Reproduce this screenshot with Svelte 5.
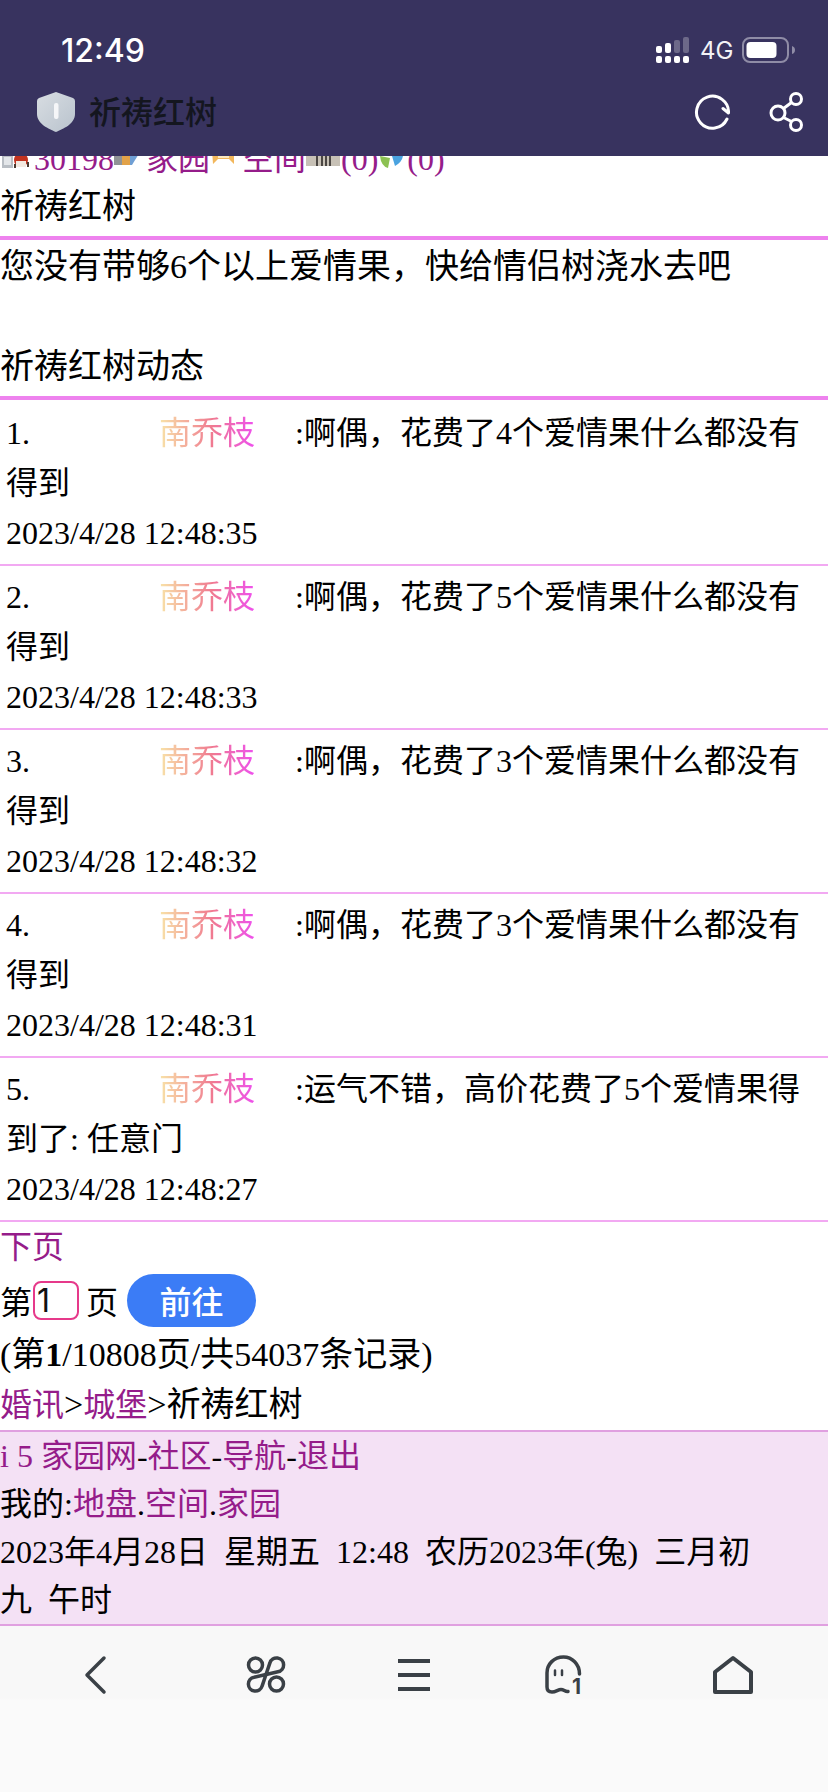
<script>
  const rows = [
    { n: '1.', text: ':啊偶，花费了4个爱情果什么都没有得到', date: '2023/4/28 12:48:35' },
    { n: '2.', text: ':啊偶，花费了5个爱情果什么都没有得到', date: '2023/4/28 12:48:33' },
    { n: '3.', text: ':啊偶，花费了3个爱情果什么都没有得到', date: '2023/4/28 12:48:32' },
    { n: '4.', text: ':啊偶，花费了3个爱情果什么都没有得到', date: '2023/4/28 12:48:31' },
    { n: '5.', text: ':运气不错，高价花费了5个爱情果得到了: 任意门', date: '2023/4/28 12:48:27' }
  ];
</script>

<div class="screen">
  <header class="top">
    <div class="status">
      <span class="time">12:49</span>
      <div class="status-right">
        <svg class="signal" width="34" height="26" viewBox="0 0 34 26">
          <g fill="#fff">
            <rect x="0" y="19" width="6" height="7" rx="2" />
            <rect x="9" y="19" width="6" height="7" rx="2" />
            <rect x="18" y="19" width="6" height="7" rx="2" />
            <rect x="27" y="19" width="6" height="7" rx="2" />
            <rect x="0" y="9" width="6" height="7" rx="2" />
            <rect x="9" y="6" width="6" height="10" rx="2" />
          </g>
          <g fill="#6d6989">
            <rect x="18" y="3" width="6" height="13" rx="2" />
            <rect x="27" y="0" width="6" height="16" rx="2" />
          </g>
        </svg>
        <span class="net">4G</span>
        <svg class="battery" width="54" height="26" viewBox="0 0 54 26">
          <rect x="1" y="1" width="45" height="24" rx="7" fill="none" stroke="#8f8ca6" stroke-width="2" />
          <rect x="4.500" y="5" width="30" height="16" rx="4" fill="#fff" />
          <path d="M50 9 Q53 10 53 13 Q53 16 50 17 Z" fill="#8f8ca6" />
        </svg>
      </div>
    </div>
    <div class="titlebar">
      <svg width="38" height="40" viewBox="0 0 38 40">
        <defs>
          <linearGradient id="sh" x1="0" y1="0" x2="1" y2="1">
            <stop offset="0" stop-color="#d8dde2" />
            <stop offset="1" stop-color="#b9c3cd" />
          </linearGradient>
        </defs>
        <path d="M19 0 L36 6 Q38 7 38 9 V22 C38 32 26 37 19 40 C12 37 0 32 0 22 V9 Q0 7 2 6 Z" fill="url(#sh)" />
        <rect x="17" y="11" width="4.500" height="16" rx="2" fill="#f5f6f8" />
      </svg>
      <span class="apptitle">祈祷红树</span>
      <svg class="refresh" width="36" height="36" viewBox="0 0 36 36" fill="none" stroke="#fff" stroke-width="3" stroke-linecap="round" stroke-linejoin="round">
        <path d="M33 25 A16 16 0 1 1 34.500 19 L29 14.500" />
      </svg>
      <svg class="share" width="36" height="42" viewBox="0 0 36 42" fill="none" stroke="#fff" stroke-width="3">
        <circle cx="9" cy="22" r="7" />
        <circle cx="27" cy="8" r="5.500" />
        <circle cx="27" cy="34" r="5.500" />
        <path d="M14.500 17.500 L22.500 11.500 M14.500 26.500 L22.500 30.500" />
      </svg>
    </div>
  </header>

  <main class="page">
    <div class="toprow">
      <svg class="ico w34" viewBox="0 0 34 30">
        <rect x="2" y="10" width="11" height="18" fill="#b9bec4" />
        <rect x="4" y="17" width="7" height="8" fill="#e3e6e9" />
        <circle cx="21" cy="20" r="7" fill="#c2331f" />
        <rect x="16" y="21" width="10" height="6" fill="#f3e9e0" />
        <rect x="14" y="24" width="2" height="4" fill="#4a3a30" />
        <rect x="27" y="22" width="2" height="5" fill="#4a3a30" />
      </svg><a href="#a">30198</a><svg class="ico w32" viewBox="0 0 32 30">
        <rect x="0" y="14" width="8" height="11" fill="#8f9396" />
        <rect x="8" y="12" width="8" height="13" fill="#e2a248" />
        <path d="M16 12 H26 L18 25 H16 Z" fill="#6f9fd4" />
      </svg><a href="#b">家园</a><svg class="ico w32" viewBox="0 0 32 30">
        <path d="M2 10 H24 V24 L19 19 H8 L3 24 Z" fill="#f2b75c" />
        <rect x="8" y="10" width="11" height="8" fill="#fbe9c0" />
      </svg><a href="#c">空间</a><svg class="ico w35" viewBox="0 0 35 30">
        <rect x="0" y="12" width="34" height="14" fill="#c7c1b6" />
        <rect x="10" y="14" width="2" height="12" fill="#4b4743" />
        <rect x="15" y="14" width="2" height="12" fill="#4b4743" />
        <rect x="19" y="14" width="2" height="12" fill="#4b4743" />
        <rect x="23" y="14" width="2" height="12" fill="#4b4743" />
      </svg><a href="#d">(0)</a><svg class="ico w29" viewBox="0 0 29 30">
        <path d="M2 16 L12 18 L10 28 Q3 26 2 16 Z" fill="#8cc152" />
        <path d="M14 16 H25 Q24 22 17 26 Z" fill="#4aa3e0" />
      </svg><a href="#e">(0)</a>
    </div>
    <div class="head">祈祷红树</div>
    <p class="msg">您没有带够6个以上爱情果，快给情侣树浇水去吧</p>
    <div class="head sub">祈祷红树动态</div>

    <div class="list">
      {#each rows as r}
        <div class="row">
          <span class="num">{r.n}</span><span class="namebox"><span class="name">南乔枝</span></span>{r.text}<br />{r.date}
        </div>
      {/each}
    </div>

    <div class="after">
      <div class="line"><a href="#n">下页</a></div>
      <div class="form">
        <span>第</span>
        <input class="pageno" value="1" readonly />
        <span class="ye">页</span>
        <button class="go">前往</button>
      </div>
      <div class="line big">(第<b>1</b>/10808页/共54037条记录)</div>
      <div class="line big crumb"><a href="#h">婚讯</a>&gt;<a href="#c2">城堡</a>&gt;祈祷红树</div>
    </div>

    <footer class="foot">
      <div><a href="#i">i 5 家园网</a>-<a href="#s">社区</a>-<a href="#g">导航</a>-<a href="#o">退出</a></div>
      <div>我的:<a href="#l">地盘</a>.<a href="#k">空间</a>.<a href="#j">家园</a></div>
      <div>2023年4月28日&nbsp;&nbsp;星期五&nbsp;&nbsp;12:48&nbsp;&nbsp;农历2023年(兔)&nbsp;&nbsp;三月初九&nbsp;&nbsp;午时</div>
    </footer>
  </main>

  <nav class="nav">
    <svg width="40" height="40" viewBox="0 0 40 40" fill="none" stroke="#3a4046" stroke-width="3.500" stroke-linecap="round" stroke-linejoin="round">
      <path d="M29 3 L12 20 L29 37" />
    </svg>
    <svg width="40" height="40" viewBox="0 0 40 40" fill="none" stroke="#3a4046" stroke-width="3.500">
      <circle cx="9.500" cy="10" r="7" />
      <circle cx="30.500" cy="29" r="7" />
      <path d="M20 19.500 L23.900 7.900 A7 7 0 1 1 31.900 16.800 Z" />
      <path d="M20 19.500 L16.100 31.100 A7 7 0 1 1 8.100 22.200 Z" />
    </svg>
    <svg width="40" height="40" viewBox="0 0 40 40" fill="#3a4046">
      <rect x="4" y="4" width="32" height="4" />
      <rect x="4" y="18" width="32" height="4" />
      <rect x="4" y="32" width="32" height="4" />
    </svg>
    <svg width="40" height="40" viewBox="0 0 40 40" fill="none" stroke="#3a4046" stroke-width="3.500" stroke-linecap="round">
      <path d="M36.500 19 C36.500 9 29 2 20.500 2 C11 2 4 9 4 18 V32 Q4 37 9 37 C13 37 15 34.500 18 34.500 C21 34.500 22 37 25 36.500" />
      <path d="M12 15.500 V20 M19 15.500 V20" stroke-width="2.500" />
      <text x="29" y="38.500" class="one">1</text>
    </svg>
    <svg width="40" height="40" viewBox="0 0 40 40" fill="none" stroke="#3a4046" stroke-width="4" stroke-linejoin="round">
      <path d="M2 17 L20 3 L38 17 V37 H2 Z" />
    </svg>
  </nav>
</div>

<style>
  :global(body) {
    margin: 0;
    background: #fff;
  }
  .screen {
    width: 828px;
    height: 1792px;
    display: flex;
    flex-direction: column;
    overflow: hidden;
    font-family: "Liberation Serif", "Noto Sans CJK SC", serif;
    color: #000;
  }
  a {
    color: #951c8a;
    text-decoration: none;
    font-size: 32px;
  }

  .top {
    height: 156px;
    flex: none;
    background: #38335f;
    position: relative;
    z-index: 2;
    font-family: Inter, "Noto Sans CJK SC", sans-serif;
  }
  .status {
    height: 52px;
    padding: 24px 32px 0 61px;
    display: flex;
    align-items: center;
    justify-content: space-between;
  }
  .time {
    color: #fff;
    font-size: 32px;
    font-weight: 500;
  }
  .status-right {
    display: flex;
    align-items: center;
  }
  .net {
    color: #f2f2f6;
    font-size: 24px;
    margin: 0 10px 0 10px;
    width: 32px;
  }
  .titlebar {
    height: 72px;
    padding: 0 23px 8px 37px;
    display: flex;
    align-items: center;
  }
  .apptitle {
    margin: 0 0 4px 14px;
    font-size: 32px;
    font-weight: 500;
    color: #14161f;
  }
  .refresh {
    margin-left: auto;
  }
  .share {
    margin-left: 39px;
  }

  .page {
    flex: 1;
    min-height: 0;
    overflow: hidden;
    font-size: 34px;
  }
  .toprow {
    margin-top: -21px;
    line-height: 48px;
    font-size: 32px;
    white-space: nowrap;
  }
  .ico {
    height: 30px;
    vertical-align: baseline;
  }
  .w34 { width: 34px; }
  .w32 { width: 32px; }
  .w35 { width: 35px; }
  .w29 { width: 29px; }

  .head {
    line-height: 46px;
    padding: 1px 0 6px;
    border-bottom: 4px solid #ee82ee;
  }
  .head.sub {
    line-height: 50px;
    padding: 1px 0 4px;
  }
  .msg {
    margin: 2px 0 49px;
    line-height: 50px;
  }

  .list {
    font-size: 32px;
    line-height: 50px;
  }
  .row {
    padding: 6px;
    border-bottom: 2px solid #f2a9f2;
  }
  .row:first-child {
    padding-top: 8px;
  }
  .num {
    display: inline-block;
    width: 153px;
  }
  .namebox {
    display: inline-block;
    width: 136px;
  }
  .name {
    background: linear-gradient(90deg, #f8e4a8 0%, #f07a90 55%, #ee50ee 100%);
    -webkit-background-clip: text;
    background-clip: text;
    color: transparent;
  }

  .line {
    line-height: 48px;
    font-size: 32px;
    padding-top: 1px;
  }
  .line.big {
    font-size: 34px;
    padding-top: 0;
  }
  .line.crumb {
    margin-top: 2px;
  }
  .form {
    display: flex;
    align-items: center;
    height: 58px;
    margin-bottom: 2px;
    font-size: 32px;
  }
  .pageno {
    box-sizing: border-box;
    width: 46px;
    height: 39px;
    margin: 0 0 0 1px;
    padding: 0 0 0 2px;
    border: 2px solid #e6398a;
    border-radius: 8px;
    outline: none;
    background: #fff;
    color: #111;
    font-size: 32px;
    font-family: Inter, sans-serif;
  }
  .ye {
    margin-left: 7px;
  }
  .go {
    margin-left: 9px;
    width: 129px;
    height: 53px;
    border: none;
    border-radius: 27px;
    background: #3b7cf6;
    color: #fff;
    font-family: "Noto Sans CJK SC", sans-serif;
    font-size: 32px;
    font-weight: 500;
    padding: 0;
  }

  .foot {
    margin-top: 1px;
    border-top: 2px solid #e0a0e0;
    border-bottom: 2px solid #e0a0e0;
    background: #f4e1f5;
    font-size: 32px;
    line-height: 48px;
  }

  .nav {
    flex: none;
    height: 137px;
    padding: 29px 10px 0;
    display: grid;
    grid-template-columns: 170px 172px 124px 174px 166px;
    justify-items: center;
    align-items: start;
    background: linear-gradient(#f8f8f8 0, #f8f8f8 72px, #fafafa 74px);
  }
  .one {
    fill: #3a4046;
    stroke: none;
    font-family: Inter, sans-serif;
    font-weight: 700;
    font-size: 21px;
  }
</style>
